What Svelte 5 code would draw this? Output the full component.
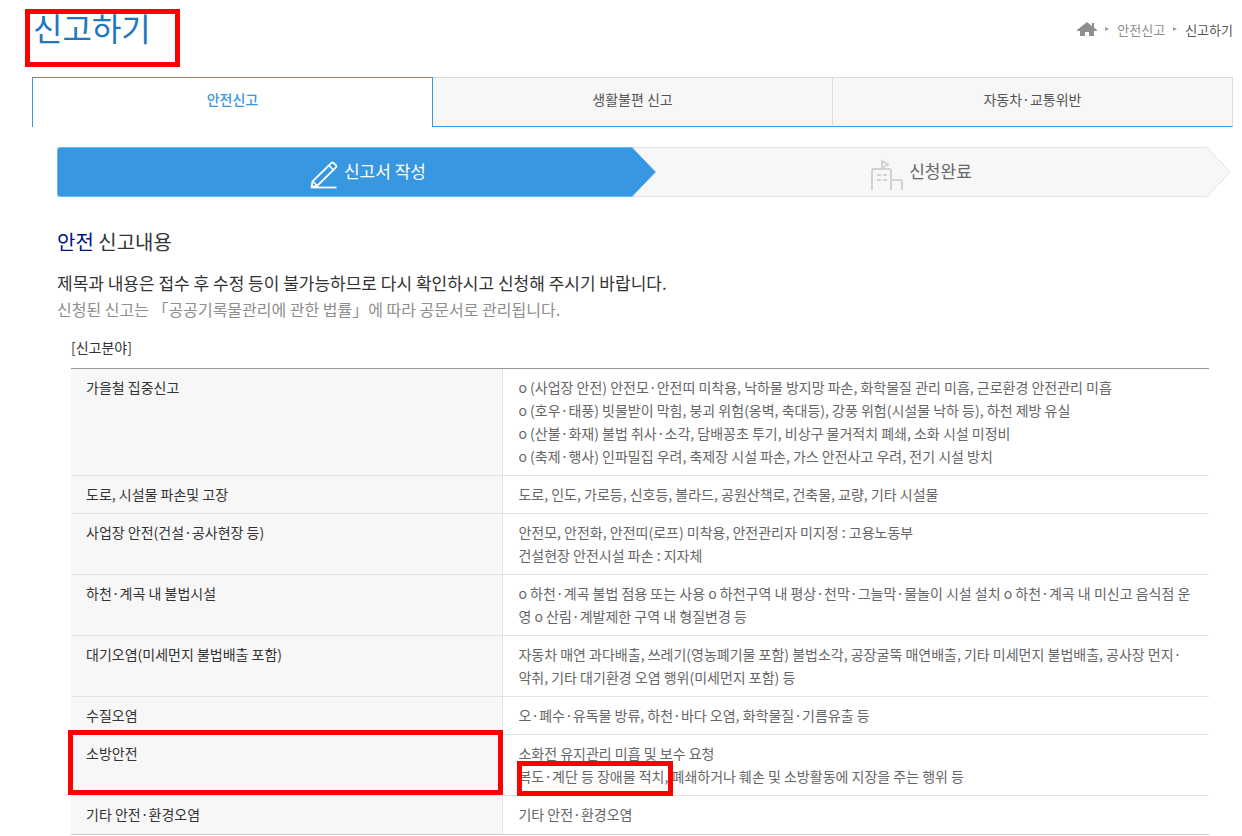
<script lang="ts">
	type Row = { name: string; lines: string[]; mark?: string };

	const tabs = ['안전신고', '생활불편 신고', '자동차·교통위반'];
	let active = $state(0);

	const rows: Row[] = [
		{
			name: '가을철 집중신고',
			lines: [
				'o (사업장 안전) 안전모·안전띠 미착용, 낙하물 방지망 파손, 화학물질 관리 미흡, 근로환경 안전관리 미흡',
				'o (호우·태풍) 빗물받이 막힘, 붕괴 위험(옹벽, 축대등), 강풍 위험(시설물 낙하 등), 하천 제방 유실',
				'o (산불·화재) 불법 취사·소각, 담배꽁초 투기, 비상구 물거적치 폐쇄, 소화 시설 미정비',
				'o (축제·행사) 인파밀집 우려, 축제장 시설 파손, 가스 안전사고 우려, 전기 시설 방치'
			]
		},
		{ name: '도로, 시설물 파손및 고장', lines: ['도로, 인도, 가로등, 신호등, 볼라드, 공원산책로, 건축물, 교량, 기타 시설물'] },
		{
			name: '사업장 안전(건설·공사현장 등)',
			lines: ['안전모, 안전화, 안전띠(로프) 미착용, 안전관리자 미지정 : 고용노동부', '건설현장 안전시설 파손 : 지자체']
		},
		{
			name: '하천·계곡 내 불법시설',
			lines: ['o 하천·계곡 불법 점용 또는 사용 o 하천구역 내 평상·천막·그늘막·물놀이 시설 설치 o 하천·계곡 내 미신고 음식점 운영 o 산림·계발제한 구역 내 형질변경 등']
		},
		{
			name: '대기오염(미세먼지 불법배출 포함)',
			lines: ['자동차 매연 과다배출, 쓰레기(영농폐기물 포함) 불법소각, 공장굴뚝 매연배출, 기타 미세먼지 불법배출, 공사장 먼지·악취, 기타 대기환경 오염 행위(미세먼지 포함) 등']
		},
		{ name: '수질오염', lines: ['오·폐수·유독물 방류, 하천·바다 오염, 화학물질·기름유출 등'] },
		{
			name: '소방안전',
			mark: '복도·계단 등 장애물 적치,',
			lines: ['소화전 유지관리 미흡 및 보수 요청', ' 폐쇄하거나 훼손 및 소방활동에 지장을 주는 행위 등']
		},
		{ name: '기타 안전·환경오염', lines: ['기타 안전·환경오염'] }
	];
</script>

<div class="page">
	<header>
		<h1><span class="marked">신고하기</span></h1>
		<nav class="crumbs" aria-label="현재 위치">
			<a href="#home" aria-label="홈">
				<svg width="20" height="14" viewBox="0 0 20 14" fill="#8e8e8e">
					<path d="M10 0 0 8v1h3v5h5v-4h4v4h5V9h3V8l-3-2.500V1h-2v3z" />
				</svg>
			</a>
			<i class="sep"></i>
			<a href="#safety">안전신고</a>
			<i class="sep"></i>
			<a href="#report" class="here">신고하기</a>
		</nav>
	</header>

	<nav class="tabs">
		{#each tabs as tab, i}
			<a href="#tab{i}" class:on={i === active} onclick={() => (active = i)}>{tab}</a>
		{/each}
	</nav>

	<main>
		<ol class="steps">
			<li class="step current">
				<div class="body">
					<svg class="pencil" width="28" height="28" viewBox="0 0 28 28" fill="none" stroke="#fff" stroke-width="1.8" stroke-linejoin="round">
						<path d="M1 26.500H26.500" />
						<path d="M1.500 26 2.500 20.500 21.500 1.800q1-.8 2 0l2.500 2.500q.8 1 0 2L7 25z" />
						<path d="M19 4.500l4.500 4.500M3 20.500l4 4" stroke-width="1.500" />
					</svg>
					<span>신고서 작성</span>
				</div>
				<svg class="tip" width="24" height="50" viewBox="0 0 24 50">
					<path d="M0 .5 23.500 25 0 49.500" fill="#3897e1" stroke="#62baf5" />
				</svg>
			</li>
			<li class="step">
				<div class="body">
					<svg class="building" width="32" height="32" viewBox="0 0 32 32" fill="none" stroke="#d2d2d2" stroke-width="2">
						<path d="M1 31V12q0-2 2-2h15q2 0 2 2v19M20 21h9q2 0 2 2v8M11 10V2l6 3.500-6 3.500" />
						<path d="M6 16h4M12 16h4M6 21h4M12 21h4" />
					</svg>
					<span>신청완료</span>
				</div>
				<svg class="tip" width="24" height="50" viewBox="0 0 24 50">
					<path d="M0 .5 23.500 25 0 49.500" fill="#f7f7f7" stroke="#e3e3e3" />
				</svg>
			</li>
		</ol>

		<h2><em>안전</em> 신고내용</h2>
		<p class="notice">제목과 내용은 접수 후 수정 등이 불가능하므로 다시 확인하시고 신청해 주시기 바랍니다.</p>
		<p class="notice sub">신청된 신고는 「공공기록물관리에 관한 법률」에 따라 공문서로 관리됩니다.</p>

		<section>
			<table>
				<caption>[신고분야]</caption>
				<tbody>
					{#each rows as row}
						<tr>
							<th scope="row" class:boxed={row.mark}>{row.name}</th>
							<td>
								{#each row.lines as line, i}
									<div>{#if row.mark && i === 1}<span class="marked">{row.mark}</span>{/if}{line}</div>
								{/each}
							</td>
						</tr>
					{/each}
				</tbody>
			</table>
		</section>
	</main>
</div>

<style>
	:global(body) {
		margin: 0;
		background: #fff;
	}
	.page {
		padding: 8px 9px 0 32px;
		font-family: 'Noto Sans CJK KR', 'Noto Sans', sans-serif;
		font-size: 14px;
		line-height: 23px;
		color: #333;
	}
	a {
		color: inherit;
		text-decoration: none;
	}
	header {
		display: flex;
		justify-content: space-between;
		height: 69px;
	}
	h1 {
		margin: 0;
		padding-left: 1px;
		font-size: 32px;
		font-weight: 400;
		line-height: 38px;
		color: #2277bb;
	}
	.marked,
	.boxed {
		position: relative;
	}
	.marked::after,
	.boxed::after {
		content: '';
		position: absolute;
		border: 5px solid #f00;
		pointer-events: none;
	}
	h1 .marked::after {
		inset: 5px -29px -17px -8px;
	}
	td .marked::after {
		inset: -5px -5px -10px -1px;
	}
	.boxed::after {
		inset: -5px -1px 0 -3px;
	}
	.crumbs {
		display: flex;
		align-items: center;
		height: 42px;
		font-size: 13px;
		color: #8e8e8e;
	}
	.crumbs svg {
		display: block;
	}
	.crumbs .here {
		color: #555;
	}
	.sep {
		margin: 0 8px;
		border: solid transparent;
		border-width: 2px 0 2px 4px;
		border-left-color: #999;
	}
	.tabs {
		display: flex;
	}
	.tabs a {
		flex: 1;
		box-sizing: border-box;
		height: 50px;
		border: 1px solid #ddd;
		border-width: 1px 1px 1px 0;
		border-bottom-color: #3897e1;
		background: #f7f7f7;
		line-height: 43px;
		text-align: center;
		color: #555;
	}
	.tabs a.on {
		border: 1px solid #3897e1;
		border-bottom: 0;
		background: #fff;
		color: #3897e1;
		font-weight: 500;
	}
	main {
		padding: 20px 2px 0 25px;
	}
	.steps {
		display: flex;
		margin: 0;
		padding: 0;
		list-style: none;
	}
	.step {
		display: flex;
		flex: 1;
	}
	.step.current {
		position: relative;
		margin-right: -24px;
	}
	.body {
		flex: 1;
		display: flex;
		justify-content: center;
		box-sizing: border-box;
		height: 50px;
		padding-left: 4px;
		border: solid #e3e3e3;
		border-width: 1px 0;
		background: #f7f7f7;
		font-size: 17px;
		line-height: 46px;
		color: #666;
	}
	.current .body {
		padding-left: 46px;
		border-color: #62baf5;
		border-left-width: 1px;
		border-radius: 3px 0 0 3px;
		background: #3897e1;
		color: #fff;
	}
	.tip {
		flex: none;
	}
	.pencil {
		margin: 13px 6px 0 0;
	}
	.building {
		margin: 11px 6px 0 0;
	}
	h2 {
		margin: 30px 0 14px;
		font-size: 20px;
		font-weight: 400;
		line-height: 29px;
	}
	h2 em {
		font-style: normal;
		color: #00138f;
	}
	.notice {
		margin: 0;
		font-size: 17px;
		line-height: 26px;
	}
	.sub {
		font-size: 16px;
		color: #8e8e8e;
	}
	section {
		padding: 14px 22px 0 14px;
	}
	table {
		width: 100%;
		table-layout: fixed;
		border-spacing: 0;
		border-top: 1px solid #999;
		border-bottom: 1px solid #ccc;
	}
	caption {
		padding-bottom: 9px;
		text-align: left;
	}
	th,
	td {
		padding: 7px 15px;
		border-bottom: 1px solid #e3e3e3;
		vertical-align: top;
		text-align: left;
		font-weight: 400;
	}
	th {
		box-sizing: border-box;
		width: 38%;
		border-right: 1px solid #e3e3e3;
		background: #f7f7f7;
	}
	td {
		color: #666;
	}
	tr:last-child > * {
		padding-bottom: 8px;
		border-bottom: 0;
	}
</style>
